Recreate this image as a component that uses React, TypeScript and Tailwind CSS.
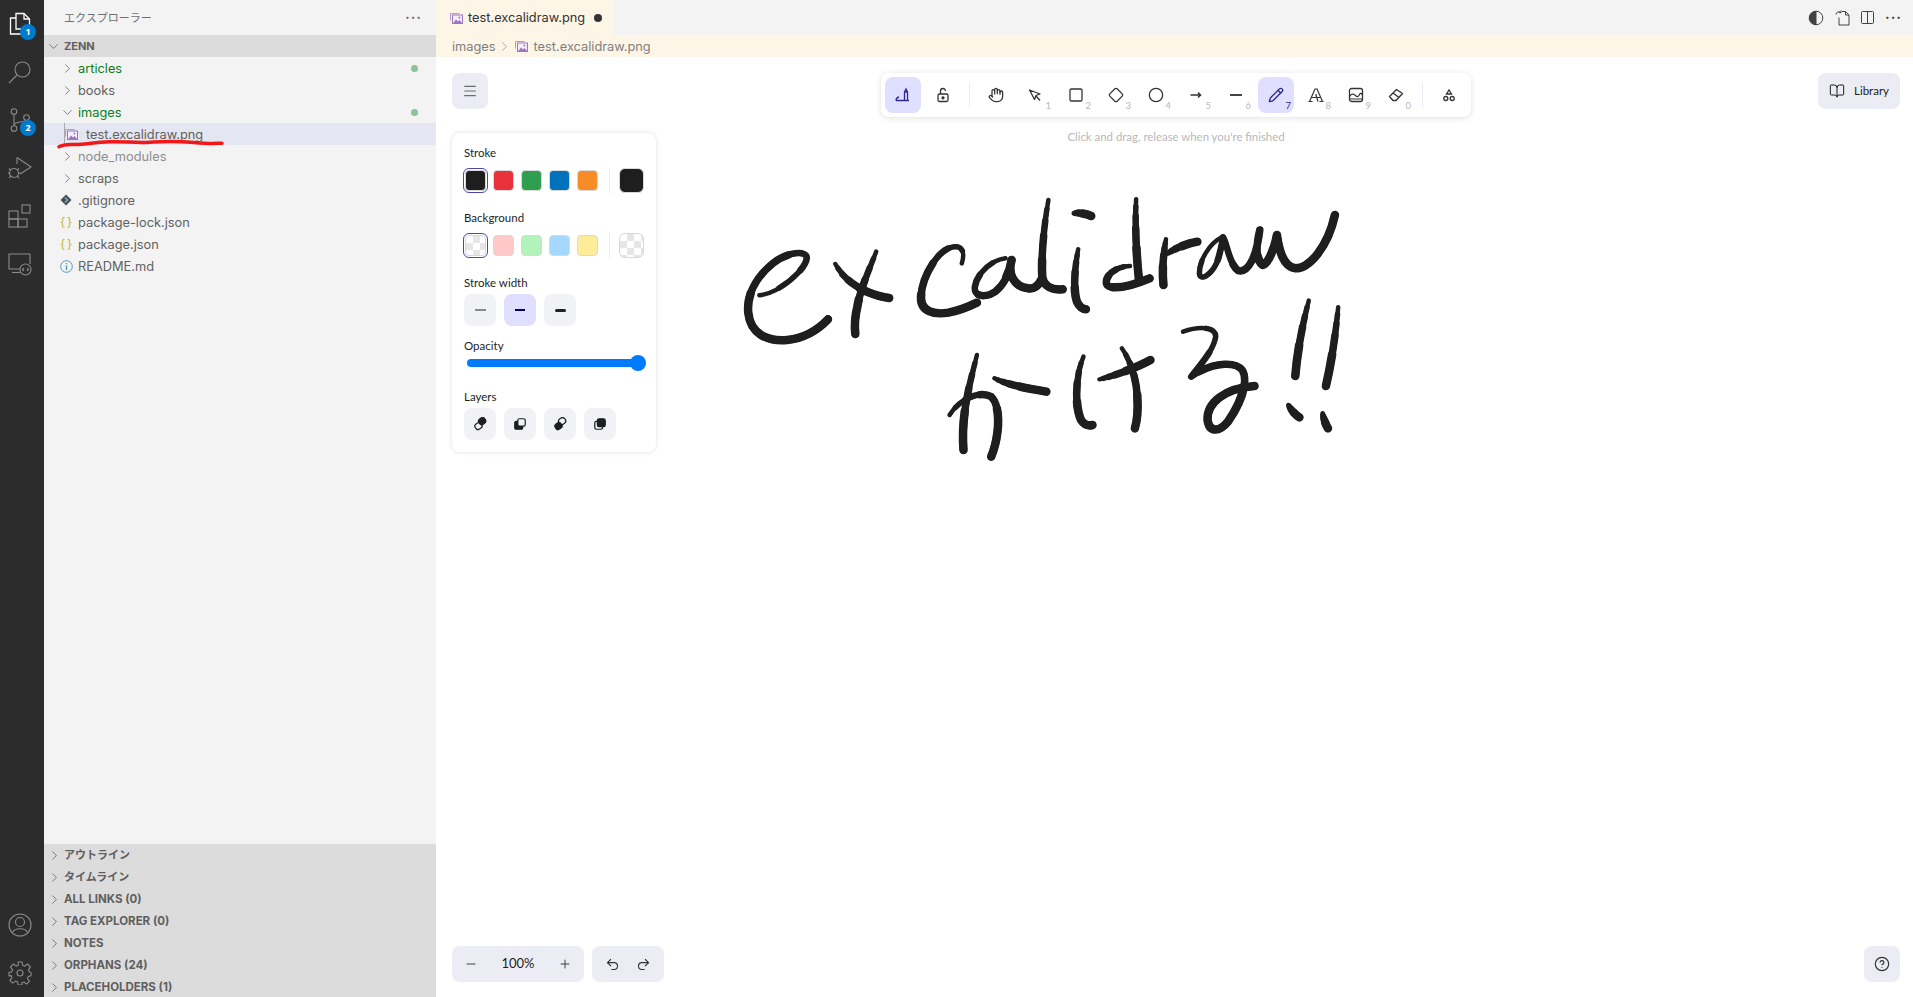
import React from 'react';
import {
  BookOpen,
  ChevronDown,
  ChevronRight,
  Circle,
  CircleHelp,
  Diamond,
  Hand,
  Menu,
  Minus,
  Pencil,
  Plus,
  Redo2,
  Square,
  Undo2,
} from 'lucide-react';

const ui = "font-['Inter','Noto_Sans_CJK_JP',sans-serif]";
const exc = "font-['Lato','Noto_Sans',sans-serif]";

function ImageFileIcon({ className = '' }: { className?: string }) {
  return (
    <svg viewBox="0 0 13 12" className={`w-[13px] h-[12px] shrink-0 ${className}`}>
      <path d="M.5 8.500V1.500h9" fill="none" stroke="#b79ad0" strokeWidth="1" />
      <rect x="2.500" y="3" width="10" height="8.500" fill="#f3eef8" stroke="#a074c4" strokeWidth="1" />
      <path d="M3 11.500l3-4 2 2 1.500-1.500 3 3.500z" fill="#a074c4" />
      <circle cx="9.500" cy="5.500" r="1" fill="#a074c4" />
    </svg>
  );
}

function ActivityIcon({ children, badge }: { children: React.ReactNode; badge?: string }) {
  return (
    <div className="relative h-12 w-11 flex items-center pl-2">
      <svg viewBox="0 0 24 24" className="w-6 h-6" fill="none" stroke="#8b8b8b" strokeWidth="1.1">
        {children}
      </svg>
      {badge && (
        <span className="absolute left-[20px] top-[24px] w-4 h-4 rounded-full bg-[#007acc] text-white text-[9px] font-bold flex items-center justify-center">
          {badge}
        </span>
      )}
    </div>
  );
}

function ActivityBar() {
  return (
    <div className="w-11 shrink-0 h-full bg-[#2c2c2c] flex flex-col justify-between overflow-hidden">
      <div>
        <ActivityIcon badge="1">
          <g stroke="#ffffff" strokeWidth="1.3">
            <path d="M8 6H2.500v16H15v-5" />
            <path d="M8 1.500h8l5.500 5.500v10H8z" />
            <path d="M16 1.500V7h5.500" />
          </g>
        </ActivityIcon>
        <ActivityIcon>
          <circle cx="14.500" cy="9.500" r="7.500" />
          <path d="M9 15l-8 8" />
        </ActivityIcon>
        <ActivityIcon badge="2">
          <circle cx="6" cy="3.500" r="2.800" />
          <circle cx="6" cy="20.500" r="2.800" />
          <circle cx="18.500" cy="9.500" r="2.800" />
          <path d="M6 6.500v11M6 17c1-4 10-2 12-5" />
        </ActivityIcon>
        <ActivityIcon>
          <path d="M9 1.500L23 11 12 18" />
          <path d="M9 1.500V8" />
          <circle cx="6" cy="17" r="4.500" />
          <path d="M1 12.500l2 2M11 12.500l-2 2M0 17h1.500M10.500 17H12M1 22l2-2M11 22l-2-2" />
        </ActivityIcon>
        <ActivityIcon>
          <rect x="1" y="7" width="9" height="8" />
          <rect x="1" y="15" width="9" height="8" />
          <rect x="10" y="15" width="9" height="8" />
          <rect x="14" y="1" width="8" height="8" />
        </ActivityIcon>
        <ActivityIcon>
          <path d="M12 17H1V2h21v10" />
          <path d="M4 20.500h8" />
          <circle cx="17.500" cy="17.500" r="5.500" />
          <path d="M16 16l-1.500 1.500L16 19M19 16l1.500 1.500L19 19" />
        </ActivityIcon>
      </div>
      <div>
        <ActivityIcon>
          <circle cx="12" cy="12" r="11" />
          <circle cx="12" cy="9" r="4.500" />
          <path d="M4.500 19.500c2-5 13-5 15 0" />
        </ActivityIcon>
        <ActivityIcon>
          <circle cx="12" cy="12" r="3" />
          <path d="M10 1h4l.7 3.200 2 .9L19.500 3l3 3-2.100 2.800.9 2L23 11.500v3.300l-2.700.7-.9 2 2.100 2.800-2.800 2.700-2.800-2-2 .8L13.800 24h-3.600l-.7-3.100-2-.8-2.800 2-2.800-2.700 2.100-2.800-.9-2L1 14.800v-3.300l2.700-.7.9-2L2.500 6l3-3 2.800 2.100 2-.9z" />
        </ActivityIcon>
      </div>
    </div>
  );
}

function TreeRow({ label, depth = 1, open, color = 'text-[#616161]', dot, icon, selected }: {
  label: string;
  depth?: number;
  open?: boolean;
  color?: string;
  dot?: boolean;
  icon?: React.ReactNode;
  selected?: boolean;
}) {
  return (
    <div className={`relative h-[22px] flex items-center text-[12.8px] ${color} ${selected ? 'bg-[#e4e6f1]' : ''}`}>
      {depth === 2 && <span className="absolute left-5 top-0 bottom-0 w-px bg-[#a9a9a9]" />}
      {depth === 2 ? (
        <span className="flex items-center justify-center shrink-0 w-[30px] ml-[12px]">{icon}</span>
      ) : icon ? (
        <span className="flex items-center justify-center shrink-0 w-4 ml-[14px] mr-[4px]">{icon}</span>
      ) : (
        <span className="flex items-center justify-center shrink-0 w-4 ml-[15px] mr-[3px]">
          {open
            ? <ChevronDown size={15} strokeWidth={1} className="text-[#424242]" />
            : <ChevronRight size={15} strokeWidth={1} className="text-[#424242]" />}
        </span>
      )}
      <span className="mt-[2px]">{label}</span>
      {dot && <span className="absolute right-[18px] w-[7px] h-[7px] rounded-full bg-[#8cc29a]" />}
    </div>
  );
}

function Braces() {
  return <span className="text-[#b7b73b] text-[12px] tracking-[2px] leading-none pl-[2px]">{'{}'}</span>;
}

function Sidebar() {
  const collapsed = ['アウトライン', 'タイムライン', 'ALL LINKS (0)', 'TAG EXPLORER (0)', 'NOTES', 'ORPHANS (24)', 'PLACEHOLDERS (1)'];
  return (
    <div className={`relative w-[392px] shrink-0 h-full bg-[#f3f3f3] overflow-hidden ${ui}`}>
      <div className="h-[844px]">
        <div className="h-[35px] flex items-center justify-between pl-5 pr-[14px] text-[11px] text-[#6f6f6f]">
          <span className="mt-[2px]">エクスプローラー</span>
          <span className="text-[14px] font-bold tracking-[1px] leading-none -mt-2">...</span>
        </div>
        <div className="h-[22px] bg-[#dcdcdc] flex items-center text-[11px] font-bold text-[#5f5f5f]">
          <ChevronDown size={15} strokeWidth={1} className="ml-[2px] mr-[3px] text-[#424242]" />
          ZENN
        </div>
        <TreeRow label="articles" color="text-[#0b7f16]" dot />
        <TreeRow label="books" />
        <TreeRow label="images" open color="text-[#0b7f16]" dot />
        <TreeRow label="test.excalidraw.png" depth={2} selected icon={<ImageFileIcon />} />
        <TreeRow label="node_modules" color="text-[#8e8e8e]" />
        <TreeRow label="scraps" />
        <TreeRow
          label=".gitignore"
          icon={
            <svg viewBox="0 0 12 12" className="w-3 h-3">
              <path d="M6 .5L11.500 6 6 11.500.5 6z" fill="#41535b" />
              <path d="M5 3.500l2.500 2.500L5 8.500" fill="none" stroke="#f3f3f3" strokeWidth="1" />
            </svg>
          }
        />
        <TreeRow label="package-lock.json" icon={<Braces />} />
        <TreeRow label="package.json" icon={<Braces />} />
        <TreeRow
          label="README.md"
          icon={
            <svg viewBox="0 0 13 13" className="w-[13px] h-[13px]" fill="none" stroke="#519aba" strokeWidth="1">
              <circle cx="6.500" cy="6.500" r="5.800" />
              <path d="M6.500 5.500v4.500M6.500 3v1.300" strokeWidth="1.400" />
            </svg>
          }
        />
      </div>
      <div className="bg-[#dcdcdc]">
        {collapsed.map(name => (
          <div key={name} className="h-[22px] flex items-center font-bold text-[#5f5f5f]">
            <ChevronRight size={15} strokeWidth={1} className="ml-[3px] mr-[2px] text-[#424242]" />
            <span className={/^[A-Z]/.test(name) ? 'text-[11.5px] mt-[2px]' : 'text-[11px]'}>{name}</span>
          </div>
        ))}
      </div>
      <svg viewBox="0 0 392 12" className="absolute left-0 top-[138px] w-[392px] h-3" fill="none">
        <path d="M15 8.700C18 7 21 6 30 6.500S50 4 66 3.700 90 5 106 4.200 130 2.800 150 4.500 170 5.300 178 5.200" stroke="#f41717" strokeWidth="3.500" strokeLinecap="round" />
      </svg>
    </div>
  );
}

function TabBar() {
  return (
    <div className={`h-[35px] shrink-0 bg-[#f3f3f3] flex items-center justify-between ${ui}`}>
      <div className="h-full w-[177px] bg-[#fdf5e6] flex items-center pl-[14px] text-[12.8px] text-[#333333]">
        <ImageFileIcon />
        <span className="ml-[5px]">test.excalidraw.png</span>
        <span className="ml-[9px] w-2 h-2 rounded-full bg-[#333333]" />
      </div>
      <div className="flex items-center text-[#424242] pr-[11px] gap-[9px]">
        <svg viewBox="0 0 16 16" className="w-4 h-4" fill="none" stroke="currentColor">
          <circle cx="8" cy="8" r="6.800" />
          <path d="M8 1.500a6.500 6.500 0 0 0 0 13z" fill="currentColor" />
        </svg>
        <svg viewBox="0 0 16 16" className="w-4 h-4 ml-[2px]" fill="none" stroke="currentColor">
          <path d="M4 7.500V15h10V5l-3.500-3.500H7M10.500 1.500V5H14M1 4.500a3 3 0 0 1 5-2M6 .5v2.200H3.800" />
        </svg>
        <svg viewBox="0 0 16 16" className="w-4 h-4" fill="none" stroke="currentColor">
          <rect x="1.500" y="1.500" width="12" height="12" rx="1" />
          <path d="M7.500 1.500v12" />
        </svg>
        <span className="text-[14px] font-bold tracking-[1px] leading-none -mt-2">...</span>
      </div>
    </div>
  );
}

function Breadcrumb() {
  return (
    <div className={`h-[22px] shrink-0 bg-[#fdf5e6] flex items-center pl-4 text-[12.8px] text-[#7f7f7f] ${ui}`}>
      <span className="mt-[2px]">images</span>
      <ChevronRight size={15} strokeWidth={1} className="mx-[1px]" />
      <ImageFileIcon className="ml-[2px] mr-[6px]" />
      <span className="mt-[2px]">test.excalidraw.png</span>
    </div>
  );
}

function ToolButton({ children, num, active }: { children: React.ReactNode; num?: string; active?: boolean }) {
  return (
    <div className={`relative w-9 h-9 rounded-lg flex items-center justify-center ${active ? 'bg-[#e0dfff] text-[#2f2a8f]' : 'text-[#333333]'}`}>
      {children}
      {num && <span className={`absolute right-[3px] bottom-[3px] text-[9.5px] leading-none ${active ? 'text-[#2f2a8f]' : 'text-[#b8b8b8]'}`}>{num}</span>}
    </div>
  );
}

function Toolbar() {
  const s = { size: 16, strokeWidth: 1.9 };
  return (
    <div className="h-[44px] w-[590px] bg-white rounded-lg shadow-[0_1px_6px_rgba(0,0,0,0.12)] flex items-center px-1 gap-1">
      <ToolButton active>
        <svg viewBox="0 0 16 16" className="w-4 h-4" fill="none" stroke="currentColor" strokeWidth="1.300">
          <path d="M1 13.500c0-2 1-3 3-3.500M1 13.500h13" />
          <path d="M9.500 13V5l1.500-3 1.500 3v8M9.500 5h3" />
        </svg>
      </ToolButton>
      <ToolButton>
        <svg viewBox="0 0 16 16" className="w-4 h-4" fill="none" stroke="currentColor" strokeWidth="1.300">
          <rect x="3" y="7" width="10" height="7.500" rx="1.500" />
          <circle cx="8" cy="10.800" r="1" fill="currentColor" />
          <path d="M5.500 7V4a2.500 2.500 0 0 1 5 0" />
        </svg>
      </ToolButton>
      <span className="w-px h-6 bg-[#e9ecf8] mx-[4px]" />
      <ToolButton><Hand {...s} /></ToolButton>
      <ToolButton num="1">
        <svg viewBox="0 0 14 14" className="w-[14px] h-[14px] -ml-[2px]" fill="none" stroke="currentColor" strokeWidth="1.300" strokeLinejoin="round">
          <path d="M1.500 2l10.500 4-4 1.500-1.500 4z" />
          <path d="M8 8l4 4.500" />
        </svg>
      </ToolButton>
      <ToolButton num="2"><Square {...s} /></ToolButton>
      <ToolButton num="3"><Diamond {...s} /></ToolButton>
      <ToolButton num="4"><Circle {...s} /></ToolButton>
      <ToolButton num="5">
        <svg viewBox="0 0 16 16" className="w-4 h-4" fill="none" stroke="currentColor" strokeWidth="1.500">
          <path d="M2.500 8h10M10 5.500l2.500 2.500L10 10.500" />
        </svg>
      </ToolButton>
      <ToolButton num="6"><span className="w-[12px] h-[2px] bg-[#444444]" /></ToolButton>
      <ToolButton num="7" active><Pencil size={16} strokeWidth={2} /></ToolButton>
      <ToolButton num="8">
        <svg viewBox="0 0 16 16" className="w-4 h-4" fill="none" stroke="currentColor" strokeWidth="1.200">
          <path d="M1.500 14.500L7 2h2l5.500 12.500M10 14.500L7.800 7M4 10.500h8M.5 14.500h4M11.500 14.500h4" />
        </svg>
      </ToolButton>
      <ToolButton num="9">
        <svg viewBox="0 0 16 16" className="w-4 h-4" fill="none" stroke="currentColor" strokeWidth="1.300">
          <rect x="1.500" y="1.500" width="13" height="13" rx="2" />
          <path d="M1.500 9.500c2-3 4-3 6-1s3 1 4-1 2-1 3 .5" />
          <path d="M1.500 12h13" strokeWidth="1" />
        </svg>
      </ToolButton>
      <ToolButton num="0">
        <svg viewBox="0 0 16 16" className="w-4 h-4" fill="none" stroke="currentColor" strokeWidth="1.400" strokeLinejoin="round">
          <path d="M1.500 9.500L8.500 2.500l6 4-6.500 7H5z" />
          <path d="M5 6l6 4.500" />
        </svg>
      </ToolButton>
      <span className="w-px h-6 bg-[#e9ecf8] mx-[4px]" />
      <ToolButton>
        <svg viewBox="0 0 16 16" className="w-4 h-4" fill="none" stroke="currentColor" strokeWidth="1.300">
          <path d="M8 3l2.500 4H5.500z" />
          <circle cx="4.800" cy="11.500" r="2" />
          <circle cx="11.200" cy="11.500" r="2" />
        </svg>
      </ToolButton>
    </div>
  );
}

const checker = 'bg-[repeating-conic-gradient(#e6e6e6_0_25%,#ffffff_0_50%)] bg-[length:14px_14px]';

function SwatchRow({ colors, current }: { colors: string[]; current: string }) {
  return (
    <div className="flex items-center mt-[7px] h-[25px]">
      <div className="flex items-center gap-[7px] w-[145px]">
        {colors.map((c, i) => (
          <div key={i} className={`w-[21px] h-[21px] rounded-[4px] border border-[#d9d9d9] ${c} ${i === 0 ? 'outline outline-[1px] outline-[#4a47b1] outline-offset-[1px] ml-[1px]' : ''}`} />
        ))}
      </div>
      <div className="w-px h-[25px] bg-[#e9ecf8]" />
      <div className={`ml-[9px] w-[25px] h-[25px] rounded-[6px] border border-[#d9d9d9] ${current}`} />
    </div>
  );
}

function IconSquare({ children, active }: { children: React.ReactNode; active?: boolean }) {
  return (
    <div className={`w-8 h-8 rounded-lg flex items-center justify-center ${active ? 'bg-[#e0dfff]' : 'bg-[#f1f2f6]'}`}>
      {children}
    </div>
  );
}

function PropsPanel() {
  return (
    <div className="mt-6 w-[204px] h-[319px] bg-white rounded-lg shadow-[0_0_5px_rgba(0,0,0,0.12)] pl-3 pr-3 pt-[12px] text-[11.5px] leading-[16px] text-[#1e1e1e]">
      <div>Stroke</div>
      <SwatchRow colors={['bg-[#1e1e1e]', 'bg-[#e8313a]', 'bg-[#2f9e4f]', 'bg-[#0072bc]', 'bg-[#f78c27]']} current="bg-[#1e1e1e]" />
      <div className="mt-[17px]">Background</div>
      <SwatchRow colors={[checker, 'bg-[#ffc9c9]', 'bg-[#b2f2bb]', 'bg-[#a5d8ff]', 'bg-[#ffec99]']} current={checker} />
      <div className="mt-[17px]">Stroke width</div>
      <div className="flex gap-2 mt-[3px]">
        <IconSquare><span className="w-[11px] h-[1.500px] bg-[#888888]" /></IconSquare>
        <IconSquare active><span className="w-[10px] h-[2px] bg-[#030064]" /></IconSquare>
        <IconSquare><span className="w-[11px] h-[3px] rounded-sm bg-[#222222]" /></IconSquare>
      </div>
      <div className="mt-[12px]">Opacity</div>
      <div className="relative h-2 mt-[5px] ml-[3px] w-[174px] rounded-full bg-[#007bff]">
        <span className="absolute -right-[5px] -top-1 w-4 h-4 rounded-full bg-[#007bff]" />
      </div>
      <div className="mt-[22px]">Layers</div>
      <div className="flex gap-2 mt-[3px]">
        <IconSquare>
          <svg viewBox="0 0 16 16" className="w-[14px] h-[14px]" fill="none" stroke="#1e1e1e" strokeWidth="1.400">
            <rect x="2" y="7" width="8" height="7" rx="3" transform="rotate(-35 6 10)" />
            <rect x="6.500" y="1.500" width="8" height="7" rx="3" fill="#1e1e1e" transform="rotate(-35 10 5)" />
          </svg>
        </IconSquare>
        <IconSquare>
          <svg viewBox="0 0 16 16" className="w-[14px] h-[14px]" fill="none" stroke="#1e1e1e" strokeWidth="1.400">
            <rect x="5.500" y="2" width="8.500" height="8.500" rx="2" />
            <path d="M5 5H3.500A1.500 1.500 0 0 0 2 6.500v6A1.500 1.500 0 0 0 3.500 14h6a1.500 1.500 0 0 0 1.500-1.500V11H6.500A1.500 1.500 0 0 1 5 9.500z" fill="#1e1e1e" />
          </svg>
        </IconSquare>
        <IconSquare>
          <svg viewBox="0 0 16 16" className="w-[14px] h-[14px]" fill="none" stroke="#1e1e1e" strokeWidth="1.400">
            <rect x="2" y="7" width="8" height="7" rx="3" fill="#1e1e1e" transform="rotate(-35 6 10)" />
            <rect x="6.500" y="1.500" width="8" height="7" rx="3" transform="rotate(-35 10 5)" />
          </svg>
        </IconSquare>
        <IconSquare>
          <svg viewBox="0 0 16 16" className="w-[14px] h-[14px]" fill="none" stroke="#1e1e1e" strokeWidth="1.400">
            <rect x="2" y="5" width="9" height="9" rx="2" />
            <rect x="5" y="2" width="9" height="9" rx="2" fill="#1e1e1e" />
          </svg>
        </IconSquare>
      </div>
    </div>
  );
}

const strokes = [
  'M72 346C120 340 185 270 188 235C190 210 140 215 105 250C60 295 40 350 45 400C50 460 90 485 140 480C180 475 215 450 240 418',
  'M258 252C275 290 300 315 335 335C355 345 375 352 390 354',
  'M358 215C345 260 320 320 312 380C306 410 305 440 307 462',
  'M568 250C578 210 565 190 535 205C500 225 470 300 468 350C466 395 500 405 535 398C560 392 585 380 605 368',
  'M675 235C640 240 605 280 600 320C596 350 625 355 650 335C670 315 685 280 690 240C680 280 695 320 730 325C745 328 755 318 762 300',
  'M780 60C770 130 762 230 765 290C768 320 790 330 815 328',
  'M842 100C855 98 870 100 885 108',
  'M853 208C845 260 840 330 850 365C855 380 865 388 872 388',
  'M980 258C945 260 920 285 922 310C925 330 970 325 1028 295',
  'M995 58C992 130 995 220 1002 300',
  'M1068 178C1062 220 1058 270 1062 315',
  'M1070 222C1090 205 1120 190 1145 185',
  'M1205 172C1175 190 1150 240 1150 280C1152 305 1178 285 1192 250C1200 225 1205 195 1208 172C1218 190 1222 250 1245 272C1270 280 1290 230 1298 150C1290 190 1285 235 1305 255C1320 250 1335 200 1340 165C1345 210 1355 260 1385 265C1420 265 1465 200 1482 105',
  'M605 525C590 600 565 700 572 810',
  'M538 705C560 660 610 630 640 650C665 680 660 770 640 830',
  'M648 595C680 615 730 625 775 635',
  'M866 530C845 590 845 680 860 720C868 735 878 738 888 735',
  'M905 598C950 585 1000 560 1030 540',
  'M960 505C980 540 995 590 998 650C1000 690 998 720 992 745',
  'M1110 455C1150 438 1190 440 1190 470C1185 510 1155 550 1130 590C1175 550 1235 540 1255 570C1275 610 1240 690 1220 725C1200 755 1175 760 1170 720C1168 670 1210 625 1285 618',
  'M1418 362C1405 420 1390 510 1385 588',
  'M1368 675C1375 690 1385 705 1395 712',
  'M1490 382C1485 450 1475 540 1460 618',
  'M1452 700C1455 720 1460 735 1465 745',
];

// width and inset (in % of the stroke's length) of each layer, thin ends to a thick middle
const taper = [
  { width: 4.5, inset: 0 },
  { width: 5.5, inset: 3 },
  { width: 6.5, inset: 7 },
  { width: 7.5, inset: 12 },
  { width: 8.5, inset: 20 },
];

function Drawing() {
  return (
    <svg
      viewBox="0 0 1568 870"
      preserveAspectRatio="none"
      className="absolute left-[294px] top-[123px] w-[640px] h-[290px]"
      fill="none"
      stroke="#1e1e1e"
      strokeLinecap="round"
      strokeLinejoin="round"
    >
      {strokes.map((d, i) => (
        <g key={i}>
          {taper.map(t => (
            <path
              key={t.width}
              d={d}
              strokeWidth={t.width}
              pathLength={100}
              strokeDasharray={`${100 - 2 * t.inset} 200`}
              strokeDashoffset={-t.inset}
              vectorEffect="non-scaling-stroke"
            />
          ))}
        </g>
      ))}
    </svg>
  );
}

function Canvas() {
  return (
    <div className={`relative flex-1 min-h-0 bg-white pl-4 pr-[13px] pt-4 pb-[15px] flex flex-col justify-between ${exc}`}>
      <Drawing />
      <div className="relative grid grid-cols-[1fr_auto_1fr]">
        <div>
          <div className="w-9 h-9 rounded-lg bg-[#ececf4] flex items-center justify-center text-[#6b6b70]">
            <Menu size={16} strokeWidth={1.75} />
          </div>
          <PropsPanel />
        </div>
        <div className="flex flex-col items-center">
          <Toolbar />
          <div className="mt-[12px] text-[11.4px] leading-[16px] text-[#b8b8b8]">Click and drag, release when you're finished</div>
        </div>
        <div className="flex justify-end">
          <div className="h-9 w-[82px] rounded-lg bg-[#ececf4] flex items-center justify-center gap-[9px] text-[11.5px] text-[#1e1e1e]">
            <BookOpen size={16} strokeWidth={1.5} />
            Library
          </div>
        </div>
      </div>
      <div className="relative flex items-center justify-between">
        <div className="flex gap-2">
          <div className="h-9 w-[132px] rounded-lg bg-[#ececf4] flex items-center justify-between px-[12px] text-[13px] text-[#1e1e1e]">
            <Minus size={14} strokeWidth={1.75} className="text-[#444444]" />
            <span>100%</span>
            <Plus size={14} strokeWidth={1.75} className="text-[#444444]" />
          </div>
          <div className="h-9 w-[72px] rounded-lg bg-[#ececf4] flex items-center justify-around px-[5px] text-[#333333]">
            <Undo2 size={15} strokeWidth={1.75} />
            <Redo2 size={15} strokeWidth={1.75} />
          </div>
        </div>
        <div className="w-9 h-9 rounded-lg bg-[#ececf4] flex items-center justify-center text-[#333333]">
          <CircleHelp size={16} strokeWidth={1.75} />
        </div>
      </div>
    </div>
  );
}

export default function App() {
  return (
    <div className="h-screen w-full flex overflow-hidden">
      <ActivityBar />
      <Sidebar />
      <div className="flex-1 min-w-0 flex flex-col">
        <TabBar />
        <Breadcrumb />
        <Canvas />
      </div>
    </div>
  );
}
